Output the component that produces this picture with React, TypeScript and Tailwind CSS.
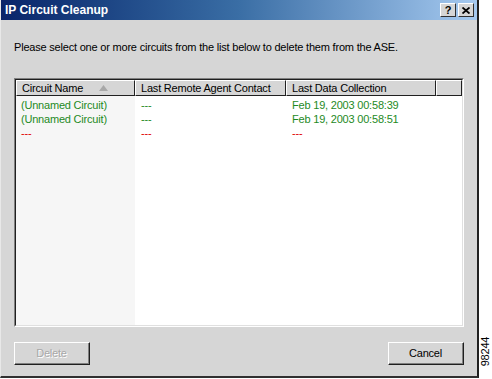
import React from "react";

const font = { fontFamily: '"Liberation Sans", Arial, sans-serif', letterSpacing: "-0.2px" };

export default function App() {
  const rows = [
    { name: "(Unnamed Circuit)", agent: "---", data: "Feb 19, 2003 00:58:39", c: "text-[#1e8a1e]" },
    { name: "(Unnamed Circuit)", agent: "---", data: "Feb 19, 2003 00:58:51", c: "text-[#1e8a1e]" },
    { name: "---", agent: "---", data: "---", c: "text-[#e00000]" },
  ];
  return (
    <div className="w-[492px] h-[379px] flex bg-white overflow-hidden" style={font}>
      <div className="w-[479px] h-[378px] flex flex-col bg-[#d6d6d6] border-l border-l-[#e8e8e8] border-r-2 border-r-[#202020] border-b-2 border-b-[#303030]">
        {/* title bar */}
        <div className="h-[20px] flex items-center pl-[4px] pr-[3px] bg-gradient-to-r from-[#0a246a] via-[#3a6ea5] to-[#a6caf0]">
          <span className="text-white font-bold text-[12px] leading-none flex-1" style={{ letterSpacing: "0px" }}>IP Circuit Cleanup</span>
          <div className="flex gap-[2px]">
            <div className="w-[16px] h-[14px] bg-[#d6d6d6] border border-t-white border-l-white border-r-[#303030] border-b-[#303030] flex items-center justify-center text-[11px] font-bold leading-none text-black">?</div>
            <div className="w-[16px] h-[14px] bg-[#d6d6d6] border border-t-white border-l-white border-r-[#303030] border-b-[#303030] flex items-center justify-center">
              <svg width="8" height="7" viewBox="0 0 8 7"><path d="M0.5 0.5 L7.5 6.5 M7.5 0.5 L0.5 6.5" stroke="black" strokeWidth="1.8" /></svg>
            </div>
          </div>
        </div>
        <div className="flex-1 flex flex-col px-[13px]">
          <div className="pt-[20px] text-[11px] text-black leading-[14px]">
            Please select one or more circuits from the list below to delete them from the ASE.
          </div>
          {/* list */}
          <div className="mt-[24px] h-[249px] border border-t-[#808080] border-l-[#808080] border-r-white border-b-white">
            <div className="h-full border border-t-[#202020] border-l-[#202020] border-r-[#e0e0e0] border-b-[#e0e0e0] bg-white flex flex-col overflow-hidden">
              <div className="flex h-[16px] text-[11px] text-black leading-none">
                {[
                  { t: "Circuit Name", w: "w-[119px]", sort: true },
                  { t: "Last Remote Agent Contact", w: "w-[151px]" },
                  { t: "Last Data Collection", w: "w-[150px]" },
                  { t: "", w: "flex-1" },
                ].map((h, i) => (
                  <div
                    key={i}
                    className={`${h.w} h-full bg-[#d6d6d6] border border-t-white border-l-white border-r-[#202020] border-b-[#202020] flex items-center pl-[5px]`}
                  >
                    <span>{h.t}</span>
                    {h.sort && (
                      <svg className="ml-[16px]" width="9" height="6" viewBox="0 0 9 6">
                        <path d="M4.5 0 L9 6 L0 6 Z" fill="#a8a8a8" />
                      </svg>
                    )}
                  </div>
                ))}
              </div>
              <div className="flex-1 flex text-[11px] leading-[14px]">
                <div className="w-[119px] bg-[#f6f6f6] pt-[2px]">
                  {rows.map((r, i) => (
                    <div key={i} className={`${r.c} pl-[5px] h-[14px]`}>{r.name}</div>
                  ))}
                </div>
                <div className="w-[151px] pt-[2px]">
                  {rows.map((r, i) => (
                    <div key={i} className={`${r.c} pl-[6px] h-[14px]`}>{r.agent}</div>
                  ))}
                </div>
                <div className="w-[150px] pt-[2px]">
                  {rows.map((r, i) => (
                    <div key={i} className={`${r.c} pl-[6px] h-[14px]`}>{r.data}</div>
                  ))}
                </div>
                <div className="flex-1" />
              </div>
            </div>
          </div>
          {/* buttons */}
          <div className="mt-[15px] flex justify-between">
            <div className="w-[76px] h-[23px] border border-t-white border-l-white border-r-[#202020] border-b-[#202020]">
              <div className="h-full flex items-center justify-center text-[11px] text-[#a8a8a8] border-r border-b border-r-[#808080] border-b-[#808080]" style={{ textShadow: "1px 1px 0 #ffffff" }}>
                Delete
              </div>
            </div>
            <div className="w-[76px] h-[23px] border border-t-white border-l-white border-r-[#202020] border-b-[#202020]">
              <div className="h-full flex items-center justify-center text-[11px] text-black border-r border-b border-r-[#808080] border-b-[#808080]">
                Cancel
              </div>
            </div>
          </div>
        </div>
      </div>
      <div className="flex-1 relative">
        <div className="absolute left-[1px] top-[331px] w-[12px] h-[40px] flex items-center justify-center">
          <span className="-rotate-90 text-[11px] text-black whitespace-nowrap leading-none">98244</span>
        </div>
      </div>
    </div>
  );
}
